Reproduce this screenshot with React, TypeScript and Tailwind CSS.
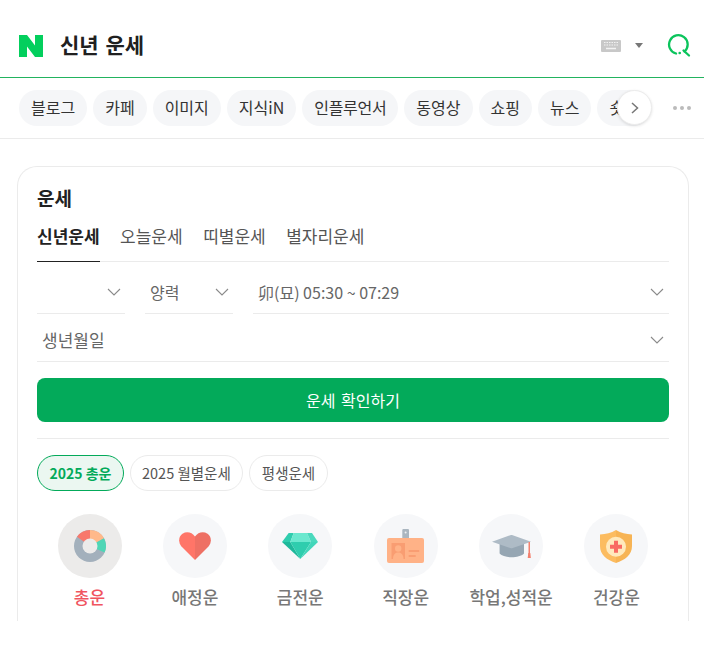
import React from "react";

const font = { fontFamily: '"Noto Sans CJK KR", "Noto Sans", sans-serif' };

function Chevron({ className = "" }: { className?: string }) {
  return (
    <svg width="14" height="8" viewBox="0 0 14 8" fill="none" className={className}>
      <path d="M1 1l6 6 6-6" stroke="#8a8a8a" strokeWidth="1.1" />
    </svg>
  );
}

function SelectBox({ className, children }: { className: string; children?: React.ReactNode }) {
  return (
    <div className={`flex items-center justify-between border-b border-[#ebebeb] text-[#666] ${className}`}>
      {children}
    </div>
  );
}

const chips = [
  { t: "블로그" },
  { t: "카페" },
  { t: "이미지" },
  { t: "지식iN" },
  { t: "인플루언서", narrow: true },
  { t: "동영상" },
  { t: "쇼핑" },
  { t: "뉴스" },
  { t: "숏폼" },
];

function Donut() {
  return (
    <svg width="32" height="32" viewBox="0 0 32 32">
      <circle cx="16" cy="16" r="16" fill="#a3b0bc" />
      <path d="M16 16L3 6.700A16 16 0 0 1 16 0Z" fill="#f8786c" />
      <path d="M16 16V0A16 16 0 0 1 30 8.200Z" fill="#ffb98a" />
      <path d="M16 16L30 8.200A16 16 0 0 1 30.500 22.500Z" fill="#4fd6b6" />
      <circle cx="16" cy="16" r="7.500" fill="#ecebea" />
    </svg>
  );
}

function Heart() {
  return (
    <svg width="32" height="28" viewBox="0 0 32 28">
      <path d="M16 28L2.500 14.500C-1 10-.5 4.500 3.500 1.800 8-1 13 .5 16 4.500Z" fill="#ff7568" />
      <path d="M16 28l13.500-13.500C33 10 32.500 4.500 28.500 1.800 24-1 19 .5 16 4.500Z" fill="#ee7064" />
    </svg>
  );
}

function Gem() {
  return (
    <svg width="36" height="26" viewBox="0 0 36 26">
      <path d="M6.700 0H11.700L8.300 9H0Z" fill="#2fcdae" />
      <path d="M11.700 0H25L29 9H8.300Z" fill="#6be8cf" />
      <path d="M25 0H30L36 9H29Z" fill="#4ad9bd" />
      <path d="M0 9H8.300L18.300 26Z" fill="#1fb89b" />
      <path d="M8.300 9H29L18.300 26Z" fill="#2fcdae" />
      <path d="M29 9H36L18.300 26Z" fill="#42d6ba" />
    </svg>
  );
}

function Badge() {
  return (
    <svg width="37" height="34" viewBox="0 0 37 34">
      <rect x="15.300" y="0" width="6.700" height="12" rx="1" fill="#aab6c0" />
      <circle cx="18.600" cy="3.500" r="1" fill="#eef1f3" />
      <rect x="0" y="9" width="37" height="25" rx="2" fill="#ffb287" />
      <rect x="4.500" y="14" width="13.500" height="16" fill="#f99d72" />
      <circle cx="11.200" cy="19.500" r="3.200" fill="#ffb287" />
      <path d="M6 30c0-5 2.700-6.500 5.200-6.500s5.300 1.500 5.300 6.500Z" fill="#ffb287" />
      <rect x="21.700" y="21" width="10.500" height="2" fill="#f99d72" />
      <rect x="21.700" y="26" width="7" height="2" fill="#f99d72" />
    </svg>
  );
}

function Cap() {
  return (
    <svg width="39" height="23" viewBox="0 0 39 23">
      <path d="M7.600 8V18.500C12 23.500 27 23.500 32 18.500V8Z" fill="#96a6b3" />
      <path d="M0 6.700L19 0h1L39 6.700 20 13.300h-1Z" fill="#aebbc6" />
      <rect x="36.500" y="7" width="1.500" height="13" fill="#f3816f" />
      <path d="M36.300 18h2l.6 5H35.700Z" fill="#f3816f" />
    </svg>
  );
}

function Shield() {
  return (
    <svg width="32" height="33" viewBox="0 0 32 33">
      <path d="M16 0c5 3 10 4 16 4.500V16c0 9-7 14-16 17Z" fill="#f7b455" />
      <path d="M16 0C11 3 6 4 0 4.500V16c0 9 7 14 16 17Z" fill="#fcbc60" />
      <circle cx="16" cy="16.700" r="10" fill="#ffe9bd" />
      <path d="M14 10.700h4v4h4v4h-4v4h-4v-4h-4v-4h4Z" fill="#f96a63" />
    </svg>
  );
}

const icons = [
  { label: "총운", Icon: Donut, on: true },
  { label: "애정운", Icon: Heart },
  { label: "금전운", Icon: Gem },
  { label: "직장운", Icon: Badge },
  { label: "학업,성적운", Icon: Cap },
  { label: "건강운", Icon: Shield },
];

export default function App() {
  return (
    <div style={font} className="h-[672px] w-[704px] overflow-hidden bg-white">
      <header className="flex h-[78px] items-center border-b border-[#22b35e] pl-[19px] pr-[13px] pt-[14px]">
        <svg width="24" height="22" viewBox="0 0 24 22">
          <path d="M0 0h8l8 10.500V0h8v22h-8L8 11.500V22H0Z" fill="#03cf5d" />
        </svg>
        <h1 className="mb-[4px] ml-[17px] text-[21px] font-bold leading-[28px] text-[#202020] [word-spacing:2px]">신년 운세</h1>
        <div className="ml-auto flex items-center">
          <svg width="20" height="12" viewBox="0 0 20 12">
            <rect width="20" height="12" rx="1" fill="#c8c8c8" />
            <path d="M3 2.500h14M3 5h14" stroke="#f2f2f2" strokeWidth="1.200" strokeDasharray="1.500 1" />
            <path d="M5 8.500h10" stroke="#f2f2f2" strokeWidth="1.500" />
          </svg>
          <div className="ml-[14px] h-0 w-0 border-x-[4.5px] border-t-[5px] border-x-transparent border-t-[#777]" />
          <svg width="24" height="24" viewBox="0 0 24 24" fill="none" className="ml-[24px]">
            <path d="M9 19.500A9.300 9.300 0 1 1 17.500 17.500" stroke="#0bc45c" strokeWidth="2.300" strokeLinecap="round" />
            <circle cx="12.700" cy="19" r="1.300" fill="#0bc45c" />
            <path d="M16.500 16.500L22 21.500" stroke="#0bc45c" strokeWidth="2.300" strokeLinecap="round" />
          </svg>
        </div>
      </header>

      <nav className="relative flex h-[61px] items-center border-b border-[#ebebeb] pl-[19px]">
        <div className="flex w-[632px] gap-[6px] overflow-hidden">
          {chips.map((c) => (
            <span
              key={c.t}
              className={`flex h-[36px] shrink-0 items-center rounded-full bg-[#f5f6f8] px-[12px] pb-[2px] text-[16px] text-[#333] ${c.narrow ? "tracking-[-0.3px]" : ""}`}
            >
              {c.t}
            </span>
          ))}
        </div>
        <button className="absolute left-[617px] top-[12px] flex h-[35px] w-[35px] items-center justify-center rounded-full border border-[#ececec] bg-white shadow-[0_1px_3px_rgba(0,0,0,0.12)]">
          <svg width="8" height="12" viewBox="0 0 8 12" fill="none">
            <path d="M1 1l5.500 5L1 11" stroke="#777" strokeWidth="1.500" />
          </svg>
        </button>
        <div className="ml-[22px] flex gap-[3px]">
          <i className="h-[4px] w-[4px] rounded-full bg-[#bbb]" />
          <i className="h-[4px] w-[4px] rounded-full bg-[#bbb]" />
          <i className="h-[4px] w-[4px] rounded-full bg-[#bbb]" />
        </div>
      </nav>

      <main className="pl-[17px] pr-[15px] pt-[27px]">
        <section className="h-[455px] rounded-t-[20px] border-x border-t border-[#ebebeb] px-[19px] pt-[19px]">
          <h2 className="text-[19px] font-bold leading-[24px] text-[#222]">운세</h2>
          <div className="mt-[1px] flex gap-[20.5px] border-b border-[#ebebeb] text-[17px] leading-[50px] text-[#555]">
            <span className="-mb-px h-[51px] border-b border-[#222] font-bold text-[#222]">신년운세</span>
            <span>오늘운세</span>
            <span>띠별운세</span>
            <span>별자리운세</span>
          </div>
          <div className="flex gap-[20px] text-[16px]">
            <SelectBox className="h-[52px] w-[88px] justify-end pr-[4px] pt-[8px]">
              <Chevron />
            </SelectBox>
            <SelectBox className="h-[52px] w-[88px] pl-[5px] pr-[4px] pt-[8px]">
              양력
              <Chevron />
            </SelectBox>
            <SelectBox className="h-[52px] flex-1 pl-[5px] pr-[5px] pt-[8px]">
              <span>卯(묘) 05:30 ~ 07:29</span>
              <Chevron />
            </SelectBox>
          </div>
          <SelectBox className="h-[48px] pl-[5px] pr-[5px] pt-[5px] text-[17px]">
            생년월일
            <Chevron />
          </SelectBox>
          <button className="mt-[16px] flex h-[44px] w-full items-center justify-center rounded-[8px] bg-[#03aa5a] text-[16px] font-normal text-white [word-spacing:2px]">
            운세 확인하기
          </button>
          <div className="mt-[16px] border-t border-[#ebebeb]" />
          <div className="mt-[16px] flex gap-[6px] text-[14.5px]">
            <span className="flex h-[36px] items-center rounded-full border border-[#03aa5a] bg-[#ebf7f1] px-[11.5px] text-[14px] font-bold text-[#03aa5a]">2025 총운</span>
            <span className="flex h-[36px] items-center rounded-full border border-[#ebebeb] px-[11px] text-[#555]">2025 월별운세</span>
            <span className="flex h-[36px] items-center rounded-full border border-[#ebebeb] px-[12px] text-[#555]">평생운세</span>
          </div>
          <div className="mt-[23px] flex justify-between">
            {icons.map(({ label, Icon, on }) => (
              <div key={label} className="flex w-[105px] flex-col items-center">
                <div className={`flex h-[64px] w-[64px] items-center justify-center rounded-full ${on ? "bg-[#ecebea]" : "bg-[#f6f7f9]"}`}>
                  <Icon />
                </div>
                <span className={`mt-[5px] text-[17px] font-medium leading-[28px] ${on ? "text-[#f0555f]" : "text-[#777]"}`}>{label}</span>
              </div>
            ))}
          </div>
        </section>
      </main>
    </div>
  );
}
